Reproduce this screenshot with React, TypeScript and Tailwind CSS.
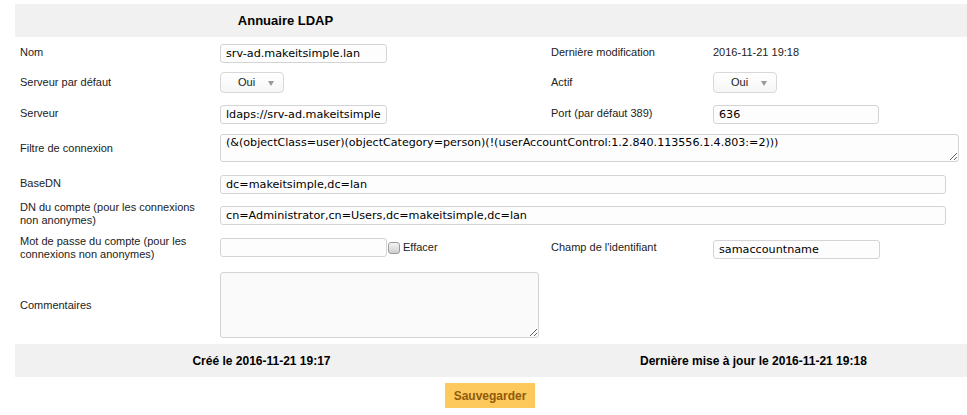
import React from "react";

const lab = "text-[11px] leading-[13px] text-[#222]";
const inp =
  "h-[19px] border border-[#d4d4d4] rounded-[3px] bg-[#fdfdfd] pl-[5px] pr-[5px] text-[11.2px] text-black outline-none";
const mono = { fontFamily: '"DejaVu Sans", sans-serif' };

function Select() {
  return (
    <div className="relative h-[21px] w-[64px] rounded-[4px] border border-[#d8d8d8] bg-gradient-to-b from-white to-[#f6f6f6] flex items-center">
      <span className="ml-[17px] text-[11px] text-[#222]">Oui</span>
      <span className="absolute right-[9px] top-[8px] w-0 h-0 border-l-[3px] border-r-[3px] border-t-[5px] border-l-transparent border-r-transparent border-t-[#999]" />
    </div>
  );
}

export default function App() {
  return (
    <div
      className="w-[967px] h-[415px] bg-white overflow-hidden"
      style={{ fontFamily: '"Liberation Sans", Arial, sans-serif' }}
    >
      <div className="ml-[15px] mt-[4px] w-[952px]">
        {/* header */}
        <div className="h-[33px] bg-[#f1f1f1] flex items-center">
          <div className="w-[541px] text-center text-[13px] font-bold text-black">Annuaire LDAP</div>
        </div>

        {/* Nom */}
        <div className="h-[30px] flex items-center">
          <div className={`w-[200px] pl-[5px] ${lab}`}>Nom</div>
          <div className="w-[331px] pl-[5px]">
            <input className={`${inp} w-[167px]`} style={mono} defaultValue="srv-ad.makeitsimple.lan" />
          </div>
          <div className={`w-[162px] pl-[5px] ${lab}`}>Dernière modification</div>
          <div className={`pl-[5px] ${lab}`}>2016-11-21 19:18</div>
        </div>

        {/* Serveur par défaut */}
        <div className="h-[31px] flex items-center">
          <div className={`w-[200px] pl-[5px] ${lab}`}>Serveur par défaut</div>
          <div className="w-[331px] pl-[5px]">
            <Select />
          </div>
          <div className={`w-[162px] pl-[5px] ${lab}`}>Actif</div>
          <div className="pl-[5px]">
            <Select />
          </div>
        </div>

        {/* Serveur */}
        <div className="h-[30px] flex items-center">
          <div className={`w-[200px] pl-[5px] ${lab}`}>Serveur</div>
          <div className="w-[331px] pl-[5px]">
            <input className={`${inp} w-[167px]`} style={mono} defaultValue="ldaps://srv-ad.makeitsimple.lan" />
          </div>
          <div className={`w-[162px] pl-[5px] ${lab}`}>Port (par défaut 389)</div>
          <div className="pl-[5px]">
            <input className={`${inp} w-[166px]`} style={mono} defaultValue="636" />
          </div>
        </div>

        {/* Filtre */}
        <div className="h-[40px] flex items-center">
          <div className={`w-[200px] pl-[5px] ${lab}`}>Filtre de connexion</div>
          <div className="pl-[5px]">
            <textarea
              className="block w-[739px] h-[28px] border border-[#d4d4d4] rounded-[3px] bg-[#fdfdfd] px-[5px] pt-[1px] text-[11.1px] leading-[13px] text-black outline-none"
              style={mono}
              defaultValue="(&(objectClass=user)(objectCategory=person)(!(userAccountControl:1.2.840.113556.1.4.803:=2)))"
            />
          </div>
        </div>

        {/* BaseDN */}
        <div className="h-[30px] flex items-center">
          <div className={`w-[200px] pl-[5px] ${lab}`}>BaseDN</div>
          <div className="pl-[5px]">
            <input className={`${inp} w-[726px]`} style={mono} defaultValue="dc=makeitsimple,dc=lan" />
          </div>
        </div>

        {/* DN du compte */}
        <div className="h-[31px] flex items-center">
          <div className={`w-[200px] pl-[5px] pr-[4px] ${lab}`}>DN du compte (pour les connexions non anonymes)</div>
          <div className="pl-[5px]">
            <input
              className={`${inp} w-[726px]`}
              style={mono}
              defaultValue="cn=Administrator,cn=Users,dc=makeitsimple,dc=lan"
            />
          </div>
        </div>

        {/* Mot de passe */}
        <div className="h-[37px] flex items-center">
          <div className={`w-[200px] pl-[5px] pr-[4px] ${lab}`}>Mot de passe du compte (pour les connexions non anonymes)</div>
          <div className="w-[331px] pl-[5px] flex items-center">
            <input type="password" className={`${inp} w-[167px]`} style={mono} />
            <span className="ml-[1px] w-[12px] h-[12px] rounded-[3px] border border-[#9a9a9a] bg-gradient-to-b from-[#f4f4f4] to-[#cfcfcf]" />
            <span className={`ml-[3px] ${lab}`}>Effacer</span>
          </div>
          <div className={`w-[162px] pl-[5px] ${lab}`}>Champ de l'identifiant</div>
          <div className="pl-[5px]">
            <input className={`${inp} w-[167px]`} style={mono} defaultValue="samaccountname" />
          </div>
        </div>

        {/* Commentaires */}
        <div className="h-[78px] flex items-center">
          <div className={`w-[200px] pl-[5px] ${lab}`}>Commentaires</div>
          <div className="pl-[5px]">
            <textarea className="block w-[319px] h-[66px] border border-[#d4d4d4] rounded-[3px] bg-[#fafafa] outline-none" />
          </div>
        </div>

        {/* footer */}
        <div className="h-[33px] bg-[#f1f1f1] flex items-center text-[12px] font-bold text-black">
          <div className="w-[493px] text-center">Créé le 2016-11-21 19:17</div>
          <div className="pl-[132px]">Dernière mise à jour le 2016-11-21 19:18</div>
        </div>

        {/* button */}
        <div className="w-[950px] flex justify-center mt-[6px]">
          <button className="w-[90px] h-[25px] bg-[#fec95c] text-[#8f5a0a] text-[12px] font-bold">Sauvegarder</button>
        </div>
      </div>
    </div>
  );
}
